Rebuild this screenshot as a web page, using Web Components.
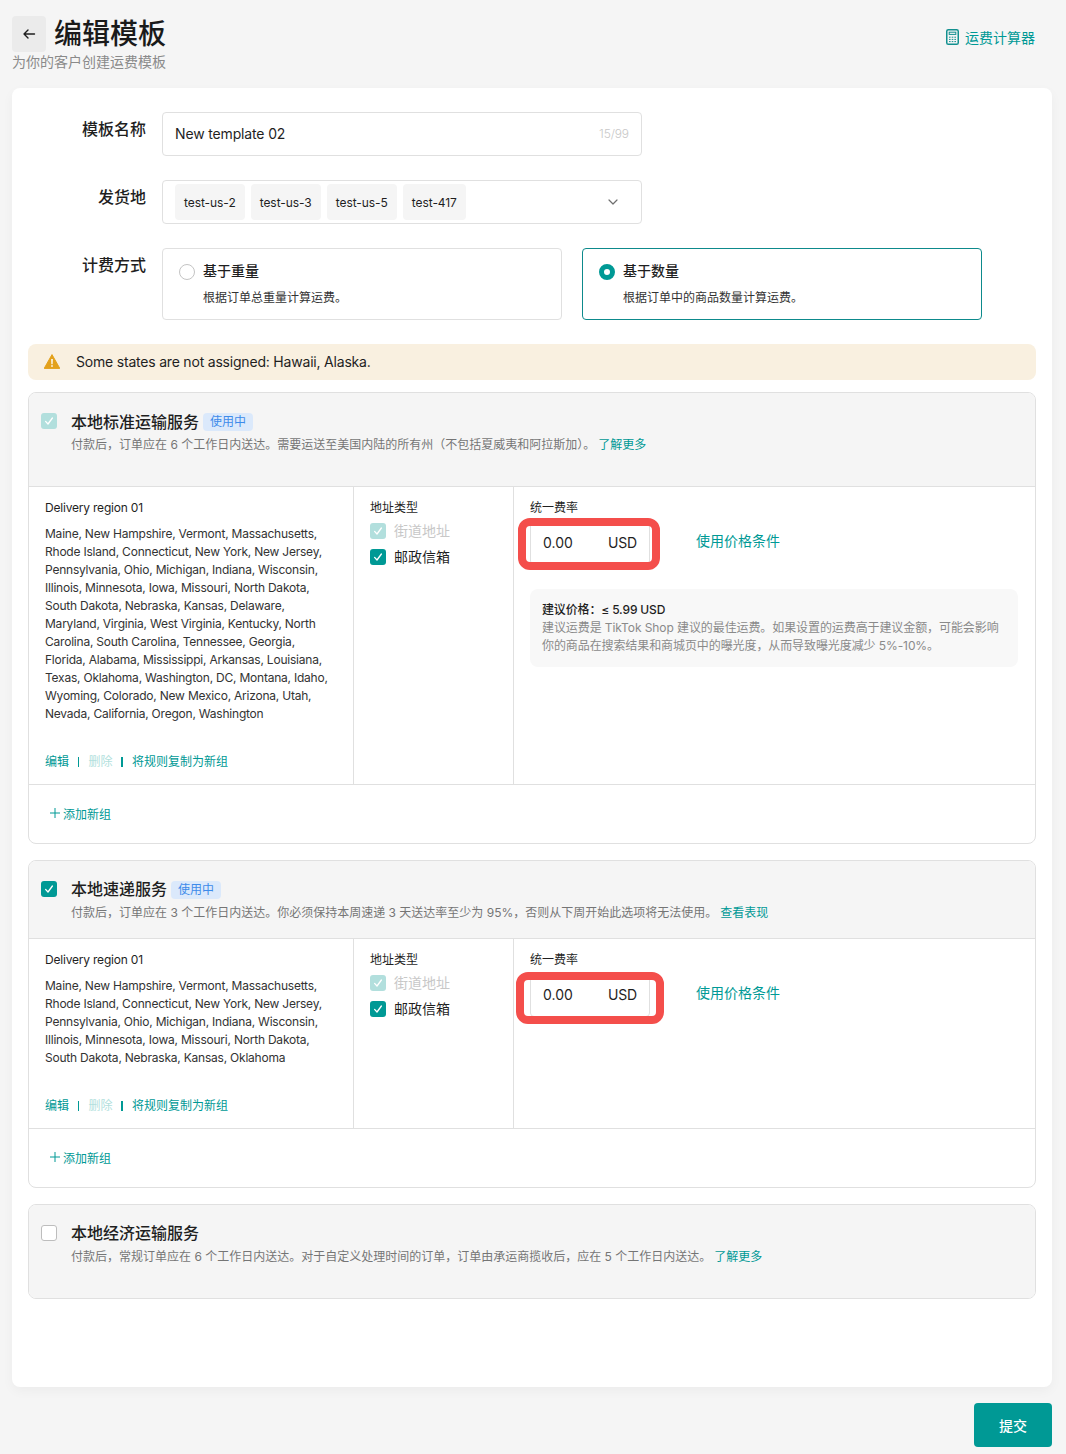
<!DOCTYPE html>
<html lang="zh">
<head>
<meta charset="utf-8">
<title>编辑模板</title>
<style>
    html, body { margin: 0; padding: 0; }
    body {
        background: #f5f5f5;
        color: #1f1f1f;
        font-family: Inter, "Noto Sans CJK SC", sans-serif;
        font-size: 14px;
    }
</style>
</head>
<body>

<shipping-page>
    <page-head slot="head" heading="编辑模板" sub="为你的客户创建运费模板"></page-head>

    <form-row label="模板名称"><name-input value="New template 02" count="15/99"></name-input></form-row>
    <form-row label="发货地"><tag-select tags="test-us-2,test-us-3,test-us-5,test-417"></tag-select></form-row>
    <form-row label="计费方式">
        <pay-option heading="基于重量" desc="根据订单总重量计算运费。"></pay-option>
        <pay-option selected heading="基于数量" desc="根据订单中的商品数量计算运费。"></pay-option>
    </form-row>

    <warn-bar>Some states are not assigned: Hawaii, Alaska.</warn-bar>

    <service-card heading="本地标准运输服务" badge="使用中" check="dim" link="了解更多" headheight="94" headpad="18"
        desc="付款后，订单应在 6 个工作日内送达。需要运送至美国内陆的所有州（不包括夏威夷和阿拉斯加）。">
        <region-row mark="first"
            states="Maine, New Hampshire, Vermont, Massachusetts, Rhode Island, Connecticut, New York, New Jersey, Pennsylvania, Ohio, Michigan, Indiana, Wisconsin, Illinois, Minnesota, Iowa, Missouri, North Dakota, South Dakota, Nebraska, Kansas, Delaware, Maryland, Virginia, West Virginia, Kentucky, North Carolina, South Carolina, Tennessee, Georgia, Florida, Alabama, Mississippi, Arkansas, Louisiana, Texas, Oklahoma, Washington, DC, Montana, Idaho, Wyoming, Colorado, New Mexico, Arizona, Utah, Nevada, California, Oregon, Washington">
            <price-hint></price-hint>
        </region-row>
        <add-group></add-group>
    </service-card>

    <service-card heading="本地速递服务" badge="使用中" check="on" link="查看表现" headheight="78" headpad="17"
        desc="付款后，订单应在 3 个工作日内送达。你必须保持本周速递 3 天送达率至少为 95%，否则从下周开始此选项将无法使用。">
        <region-row mark="second"
            states="Maine, New Hampshire, Vermont, Massachusetts, Rhode Island, Connecticut, New York, New Jersey, Pennsylvania, Ohio, Michigan, Indiana, Wisconsin, Illinois, Minnesota, Iowa, Missouri, North Dakota, South Dakota, Nebraska, Kansas, Oklahoma">
        </region-row>
        <add-group></add-group>
    </service-card>

    <service-card heading="本地经济运输服务" check="off" link="了解更多" headheight="93" headpad="17" flat
        desc="付款后，常规订单应在 6 个工作日内送达。对于自定义处理时间的订单，订单由承运商揽收后，应在 5 个工作日内送达。">
    </service-card>
</shipping-page>

<script>
const TEAL = "#009995";

class ShippingPage extends HTMLElement {
    constructor() {
        super();
        this.attachShadow({ mode: 'open' }).innerHTML = `
            <style>
                :host { display: block; padding: 16px 0 7px; }
                .card {
                    margin: 16px 14px 0 12px;
                    background: #fff;
                    border-radius: 8px;
                    box-shadow: 0 4px 12px rgba(0,0,0,.04);
                    padding: 24px 16px 88px;
                    display: flex;
                    flex-direction: column;
                }
                .foot { display: flex; justify-content: flex-end; margin: 16px 14px 0 0; }
                button {
                    width: 78px; height: 44px;
                    border: 0; border-radius: 4px;
                    background: ${TEAL}; color: #fff;
                    font: 500 14px Inter, "Noto Sans CJK SC", sans-serif;
                }
            </style>
            <slot name="head"></slot>
            <div class="card"><slot></slot></div>
            <div class="foot"><button>提交</button></div>
        `;
    }
}

class PageHead extends HTMLElement {
    constructor() {
        super();
        this.attachShadow({ mode: 'open' }).innerHTML = `
            <style>
                :host { display: flex; justify-content: space-between; padding: 0 31px 0 12px; height: 56px; }
                .top { display: flex; align-items: center; gap: 8px; height: 36px; }
                .back {
                    width: 34px; height: 36px; border-radius: 4px; background: #ebebeb;
                    display: flex; align-items: center; justify-content: center;
                }
                h1 { margin: 0; font-size: 28px; font-weight: 500; line-height: 36px; color: #1a1a1a; }
                p { margin: 0; font-size: 14px; line-height: 19px; color: #8a8a8a; }
                a { display: flex; align-items: center; gap: 6px; color: ${TEAL}; height: 44px; margin-top: -1px; font-size: 14px; }
            </style>
            <div>
                <div class="top">
                    <span class="back">
                        <svg width="14" height="14" viewBox="0 0 14 14" fill="none" stroke="#1f1f1f" stroke-width="1.4" stroke-linecap="round" stroke-linejoin="round"><path d="M12.5 7H2M6 3 2 7l4 4"/></svg>
                    </span>
                    <h1>${this.getAttribute('heading')}</h1>
                </div>
                <p>${this.getAttribute('sub')}</p>
            </div>
            <a>
                <svg width="13" height="16" viewBox="0 0 13 16" fill="none" stroke="#12908f" stroke-width="1.5"><rect x=".75" y=".75" width="11.5" height="14.5" rx="1.6"/><rect x="3.2" y="3.2" width="6.6" height="2.2" stroke-width="1"/><path d="M3 8.2h1.6M5.7 8.2h1.6M8.4 8.2H10M3 10.4h1.6M5.7 10.4h1.6M8.4 10.4H10M3 12.6h1.6M5.7 12.6h1.6M8.4 12.6H10" stroke-width="1"/></svg>
                运费计算器
            </a>
        `;
    }
}

class FormRow extends HTMLElement {
    constructor() {
        super();
        this.attachShadow({ mode: 'open' }).innerHTML = `
            <style>
                :host { display: flex; margin-bottom: 24px; }
                label {
                    width: 118px; margin-left: 0; margin-right: 16px; flex: none;
                    text-align: right; font-size: 16px; font-weight: 500; line-height: 34px;
                    color: #1f1f1f;
                }
                .body { display: flex; gap: 20px; }
            </style>
            <label>${this.getAttribute('label')}</label>
            <div class="body"><slot></slot></div>
        `;
    }
}

class NameInput extends HTMLElement {
    constructor() {
        super();
        this.attachShadow({ mode: 'open' }).innerHTML = `
            <style>
                :host {
                    display: flex; align-items: center; justify-content: space-between;
                    box-sizing: border-box; width: 480px; height: 44px; padding: 0 12px 2px;
                    border: 1px solid #e0e0e0; border-radius: 4px; font-size: 14px;
                }
                span { letter-spacing: -.15px; }
                small { font-size: 12px; color: #c8c8c8; font-weight: 300; letter-spacing: -.1px; }
            </style>
            <span>${this.getAttribute('value')}</span>
            <small>${this.getAttribute('count')}</small>
        `;
    }
}

class TagSelect extends HTMLElement {
    constructor() {
        super();
        const tags = this.getAttribute('tags').split(',').map(t => `<span>${t}</span>`).join('');
        this.attachShadow({ mode: 'open' }).innerHTML = `
            <style>
                :host {
                    display: flex; align-items: center; justify-content: space-between;
                    box-sizing: border-box; width: 480px; height: 44px; padding: 0 22px 0 12px;
                    border: 1px solid #e0e0e0; border-radius: 4px;
                }
                .tags { display: flex; gap: 6px; }
                span {
                    height: 36px; line-height: 37px; padding: 0 9px; border-radius: 4px;
                    background: #f5f5f5; font-size: 12px; color: #1f1f1f; letter-spacing: -.06px;
                }
            </style>
            <div class="tags">${tags}</div>
            <svg width="12" height="12" viewBox="0 0 12 12" fill="none" stroke="#6f6f6f" stroke-width="1.2" stroke-linecap="round" stroke-linejoin="round"><path d="M2 4l4 4 4-4"/></svg>
        `;
    }
}

class PayOption extends HTMLElement {
    constructor() {
        super();
        const on = this.hasAttribute('selected');
        this.attachShadow({ mode: 'open' }).innerHTML = `
            <style>
                :host {
                    display: block; box-sizing: border-box; width: 400px; height: 72px;
                    padding: 12px 16px; border-radius: 4px;
                    border: 1px solid ${on ? '#0d8a8c' : '#e0e0e0'};
                }
                .t { display: flex; align-items: center; gap: 8px; font-size: 14px; font-weight: 500; line-height: 20px; }
                i {
                    box-sizing: border-box; width: 16px; height: 16px; border-radius: 50%; margin-top: 2px;
                    border: ${on ? `5px solid ${TEAL}` : '1px solid #c4c4c4'}; background: #fff;
                }
                p { margin: 8px 0 0 24px; font-size: 12px; line-height: 18px; color: #333; }
            </style>
            <div class="t"><i></i>${this.getAttribute('heading')}</div>
            <p>${this.getAttribute('desc')}</p>
        `;
    }
}

class WarnBar extends HTMLElement {
    constructor() {
        super();
        this.attachShadow({ mode: 'open' }).innerHTML = `
            <style>
                :host {
                    display: flex; align-items: center; gap: 16px; height: 36px; padding: 0 16px;
                    background: #f9f0e0; border-radius: 8px; font-size: 14px; color: #1f1f1f;
                    margin-bottom: 12px; letter-spacing: -.2px;
                }
                span { margin-top: -2px; }
                svg { margin-top: -2px; }
            </style>
            <svg width="16" height="15" viewBox="0 0 16 15"><path d="M8 .6 15.8 14.4H.2z" fill="#e3a11c" stroke="#e3a11c" stroke-linejoin="round"/><path d="M7.2 5h1.6l-.2 5.2H7.4zM7.2 11.2h1.6v1.6H7.2z" fill="#fff"/></svg>
            <span><slot></slot></span>
        `;
    }
}

class CheckBox extends HTMLElement {
    constructor() {
        super();
        const state = this.getAttribute('state');
        const bg = { on: TEAL, dim: '#b2dfdd', off: '#fff' }[state];
        this.attachShadow({ mode: 'open' }).innerHTML = `
            <style>
                :host {
                    display: inline-flex; align-items: center; justify-content: center; flex: none;
                    box-sizing: border-box; width: 16px; height: 16px; border-radius: 3px;
                    background: ${bg}; ${state === 'off' ? 'border: 1px solid #bdbdbd;' : ''}
                }
            </style>
            ${state === 'off' ? '' : '<svg width="10" height="10" viewBox="0 0 10 10" fill="none" stroke="#fff" stroke-width="1.3" stroke-linecap="round" stroke-linejoin="round"><path d="M1.6 5.4 4 8l4.4-6"/></svg>'}
        `;
    }
}

class ServiceCard extends HTMLElement {
    constructor() {
        super();
        const badge = this.getAttribute('badge');
        const flat = this.hasAttribute('flat');
        const pad = +this.getAttribute('headpad');
        this.attachShadow({ mode: 'open' }).innerHTML = `
            <style>
                :host {
                    display: block; border: 1px solid #e0e0e0; border-radius: 8px;
                    overflow: hidden; margin-bottom: 16px; background: #fff;
                }
                :host(:last-child) { margin-bottom: 0; }
                header {
                    box-sizing: border-box; height: ${this.getAttribute('headheight')}px;
                    background: #f5f5f5; padding: ${pad}px 12px 0 12px;
                    ${flat ? '' : 'border-bottom: 1px solid #e0e0e0;'}
                    display: flex; gap: 14px;
                }
                header check-box { margin-top: ${20 - pad}px; }
                .t { display: flex; align-items: center; gap: 4px; height: 20px; font-size: 16px; font-weight: 500; color: #1f1f1f; }
                .b {
                    font-size: 12px; font-weight: 400; line-height: 18px; padding: 0 7px; border-radius: 4px;
                    background: #dbe9fb; color: #3d8bea; margin-top: ${pad === 18 ? 2 : 3}px;
                }
                p { margin: ${23 - pad}px 0 0; font-size: 12px; line-height: 18px; color: #757575; }
                a { color: ${TEAL}; margin-left: 3px; }
            </style>
            <header>
                <check-box state="${this.getAttribute('check')}"></check-box>
                <div>
                    <div class="t">${this.getAttribute('heading')}${badge ? `<span class="b">${badge}</span>` : ''}</div>
                    <p>${this.getAttribute('desc')}<a>${this.getAttribute('link')}</a></p>
                </div>
            </header>
            <slot></slot>
        `;
    }
}

class RegionRow extends HTMLElement {
    constructor() {
        super();
        // red marks in the reference are not the same size, one is a bit wider
        const wide = this.getAttribute('mark') === 'second';
        this.attachShadow({ mode: 'open' }).innerHTML = `
            <style>
                :host { display: flex; border-bottom: 1px solid #e0e0e0; font-size: 12px; line-height: 18px; }
                .region { box-sizing: border-box; width: 325px; padding: 12px 16px 13px; border-right: 1px solid #e0e0e0; }
                .name { letter-spacing: -.2px; }
                .states { margin: 8px 0 30px; color: #333; letter-spacing: -.22px; }
                .acts { display: flex; align-items: center; color: ${TEAL}; }
                .acts i { width: 1.5px; height: 10px; background: ${TEAL}; margin: 0 9.5px 0 8.5px; }
                .acts .off { color: #b2dfdd; }
                .addr { box-sizing: border-box; width: 160px; padding: 12px 16px; border-right: 1px solid #e0e0e0; }
                .addr div { display: flex; align-items: center; gap: 8px; font-size: 14px; height: 26px; }
                .addr .first { margin-top: 1px; color: #c8c8c8; }
                .rate { flex: 1; padding: 12px 16px; }
                .price { display: flex; align-items: center; margin-top: 4px; gap: 46px; }
                .box {
                    position: relative; box-sizing: border-box; width: 120px; height: 44px; padding: 0 12px;
                    display: flex; align-items: center; justify-content: space-between;
                    border: 1px solid #e0e0e0; border-radius: 4px; font-size: 14px; color: #1f1f1f;
                }
                .mark {
                    position: absolute; box-sizing: border-box; border: 8px solid #f44e4b; border-radius: 12px;
                    top: ${wide ? '-2px' : '-4px'}; bottom: ${wide ? '-8px' : '-6px'};
                    left: ${wide ? '-15px' : '-13px'}; right: ${wide ? '-15px' : '-11px'};
                }
                a { color: ${TEAL}; font-size: 14px; margin-top: -4px; }
            </style>
            <div class="region">
                <div class="name">Delivery region 01</div>
                <div class="states">${this.getAttribute('states')}</div>
                <div class="acts"><span>编辑</span><i></i><span class="off">删除</span><i></i><span>将规则复制为新组</span></div>
            </div>
            <div class="addr">
                地址类型
                <div class="first"><check-box state="dim"></check-box>街道地址</div>
                <div><check-box state="on"></check-box>邮政信箱</div>
            </div>
            <div class="rate">
                统一费率
                <div class="price">
                    <div class="box"><span>0.00</span><span style="letter-spacing:-.2px">USD</span><b class="mark"></b></div>
                    <a>使用价格条件</a>
                </div>
                <slot></slot>
            </div>
        `;
    }
}

class PriceHint extends HTMLElement {
    constructor() {
        super();
        this.attachShadow({ mode: 'open' }).innerHTML = `
            <style>
                :host {
                    display: block; box-sizing: border-box; width: 488px; height: 78px; margin-top: 24px;
                    padding: 12px 12px; background: #f8f8f8; border-radius: 8px;
                    font-size: 12px; line-height: 18px; color: #8a8a8a; letter-spacing: -.09px;
                }
                b { display: block; font-weight: 500; color: #1f1f1f; letter-spacing: -.15px; }
            </style>
            <b>建议价格：≤ 5.99 USD</b>
            建议运费是 TikTok Shop 建议的最佳运费。如果设置的运费高于建议金额，可能会影响你的商品在搜索结果和商城页中的曝光度，从而导致曝光度减少 5%-10%。
        `;
    }
}

class AddGroup extends HTMLElement {
    constructor() {
        super();
        this.attachShadow({ mode: 'open' }).innerHTML = `
            <style>
                :host {
                    display: flex; align-items: center; gap: 3px; box-sizing: border-box; height: 58px;
                    padding: 0 0 2px 21px; color: ${TEAL}; font-size: 12px;
                }
            </style>
            <svg width="10" height="10" viewBox="0 0 10 10" fill="none" stroke="${TEAL}" stroke-width="1"><path d="M5 0v10M0 5h10"/></svg>
            添加新组
        `;
    }
}

// children first, so the shadow roots above find them defined
customElements.define('check-box', CheckBox);
customElements.define('page-head', PageHead);
customElements.define('form-row', FormRow);
customElements.define('name-input', NameInput);
customElements.define('tag-select', TagSelect);
customElements.define('pay-option', PayOption);
customElements.define('warn-bar', WarnBar);
customElements.define('price-hint', PriceHint);
customElements.define('region-row', RegionRow);
customElements.define('add-group', AddGroup);
customElements.define('service-card', ServiceCard);
customElements.define('shipping-page', ShippingPage);
</script>
</body>
</html>
